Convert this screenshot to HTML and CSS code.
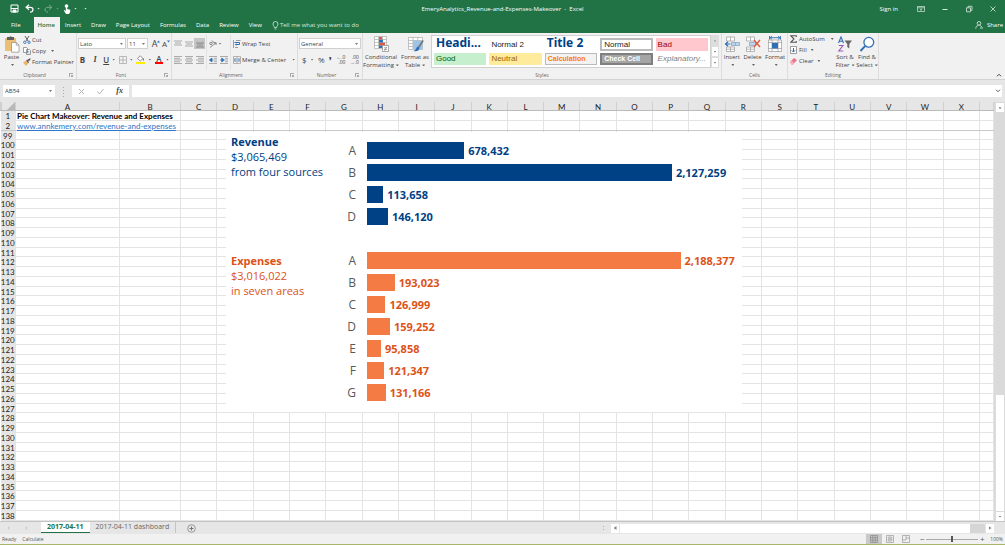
FILE: index.html
```
<!DOCTYPE html>
<html lang="en">
<head>
    <meta charset="UTF-8">
    <meta name="viewport" content="width=device-width, initial-scale=1.0">
    <title>EmeryAnalytics_Revenue-and-Expenses-Makeover - Excel</title>
    <link rel="stylesheet" href="styles.css">
</head>
<body>
    <!-- Title bar -->
    <header class="titlebar">
        <div class="quick">
            <button aria-label="Save"><svg width="9" height="9" viewBox="0 0 9 9"><path d="M1 1h7v7H1z" fill="none" stroke="#fff"/><path d="M1 4.5h7M3 6h3v2H3z" stroke="#fff" fill="#fff"/></svg></button>
            <button class="undo" aria-label="Undo"><svg width="9" height="9" viewBox="0 0 9 9"><path d="M4 .8 1.2 3.3 4 5.8M1.5 3.3h3.7c4 0 3.4 4.9-.2 4.9" fill="none" stroke="#fff" stroke-width="1.3"/></svg><i class="caret"></i></button>
            <button class="redo" aria-label="Redo"><svg width="9" height="9" viewBox="0 0 9 9"><path d="m5 .8 2.8 2.5L5 5.8M7.5 3.3H3.8c-4 0-3.4 4.9.2 4.9" fill="none" stroke="#fff"/></svg><i class="caret"></i></button>
            <button aria-label="Touch mode"><svg width="8" height="10" viewBox="0 0 8 10"><circle cx="3.5" cy="2" r="1.8" fill="#fff"/><path d="M2.8 2h1.4v3l3 .7V8L6 10H3L.8 6.5l.6-.6 1.4 1z" fill="#fff"/></svg><i class="caret"></i></button>
            <button aria-label="Customize toolbar"><i class="caret"></i></button>
        </div>
        <span>EmeryAnalytics_Revenue-and-Expenses-Makeover &nbsp;-&nbsp; Excel</span>
        <div class="window">
            <a href="#">Sign in</a>
            <button aria-label="Ribbon display options"><svg width="8" height="8" viewBox="0 0 8 8"><path d="M.5 1.5h7v5h-7zM.5 2.8h7M4 6V3.8M3 4.8l1-1 1 1" fill="none" stroke="#d7e8dd" stroke-width=".7"/></svg></button>
            <button aria-label="Minimize"><svg width="8" height="8" viewBox="0 0 8 8"><path d="M1.5 4.5h5" stroke="#d7e8dd"/></svg></button>
            <button aria-label="Restore"><svg width="8" height="8" viewBox="0 0 8 8"><path d="M1.5 2.8h4v4h-4zM3 2.8V1.3h4v4H5.5" fill="none" stroke="#d7e8dd" stroke-width=".8"/></svg></button>
            <button aria-label="Close"><svg width="8" height="8" viewBox="0 0 8 8"><path d="m1.5 1.5 5 5m0-5-5 5" stroke="#d7e8dd" stroke-width=".8"/></svg></button>
        </div>
    </header>

    <!-- Ribbon tabs -->
    <nav class="tabs">
        <a class="file" href="#">File</a>
        <a class="active" href="#">Home</a>
        <a href="#">Insert</a>
        <a href="#">Draw</a>
        <a href="#">Page Layout</a>
        <a href="#">Formulas</a>
        <a href="#">Data</a>
        <a href="#">Review</a>
        <a href="#">View</a>
        <a class="tell" href="#"><svg width="7" height="9" viewBox="0 0 7 9"><path d="M2.3 6.5C2.3 5 1 4.8 1 3a2.5 2.5 0 0 1 5 0c0 1.8-1.3 2-1.3 3.5zM2.5 8h2" fill="none" stroke="#d7e8dd" stroke-width=".8"/></svg>Tell me what you want to do</a>
        <a class="share" href="#"><svg width="8" height="8" viewBox="0 0 8 8"><circle cx="4" cy="2.3" r="1.8" fill="none" stroke="#fff" stroke-width=".7"/><path d="M.8 7.5C.8 5.5 2 4.6 3.5 4.4M4.5 4.4c1.4.2 2 1 2.2 1.8M5 7h3" fill="none" stroke="#fff" stroke-width=".7"/></svg>Share</a>
    </nav>

    <!-- Ribbon -->
    <section class="ribbon">
        <div class="group clipboard">
            <div class="tools">
                <button class="big"><svg width="16" height="17" viewBox="0 0 16 17"><path d="M1 2h11v13H1z" fill="#eac077"/><path d="M3 1h2.5a1.2 1.2 0 0 1 2.2 0H10v3H3z" fill="#5e5e5e"/><path d="M7.5 6.5h4.8l2.7 2.7v7H7.5z" fill="#fff" stroke="#8a8a8a" stroke-width=".7"/><path d="M12.3 6.5v2.7H15" fill="none" stroke="#8a8a8a" stroke-width=".7"/></svg>Paste<i class="caret"></i></button>
                <div class="stack">
                    <button><svg width="8" height="8" viewBox="0 0 8 8"><path d="M2 0l3 5M6 0 3 5" stroke="#666"/><circle cx="1.8" cy="6.3" r="1.2" fill="none" stroke="#2f6fb5" stroke-width=".9"/><circle cx="6" cy="6.3" r="1.2" fill="none" stroke="#2f6fb5" stroke-width=".9"/></svg>Cut</button>
                    <button><svg width="8" height="8" viewBox="0 0 8 8"><path d="M.5.5h3l1 1v4h-4zM3.5 2.5h3l1 1v4h-4z" fill="#fff" stroke="#777" stroke-width=".7"/><path d="M4.3 4.5h2.2M4.3 6h2.2" stroke="#2f6fb5" stroke-width=".5"/></svg>Copy <i class="caret"></i></button>
                    <button><svg width="8" height="8" viewBox="0 0 8 8"><path d="M0 4.5 3.5 2.3 5.5 5 3 8z" fill="#eab765"/><path d="m3.2 2.3 1.3-.9L6 3.3 7.8 1 7 .2 5 1.5l.8 3.2-.6.6z" fill="#555"/></svg>Format Painter</button>
                </div>
            </div>
            <h2>Clipboard<i class="launch"></i></h2>
        </div>

        <div class="group font">
            <div class="tools rows">
                <div class="row">
                    <span class="drop name"><select aria-label="Font"><option>Lato</option></select></span>
                    <span class="drop size"><select aria-label="Font size"><option>11</option></select></span>
                    <button class="grow" aria-label="Increase font size">A<svg width="3" height="3" viewBox="0 0 3 3"><path d="M0 2.5 1.5.5 3 2.5z" fill="#2f6fb5"/></svg></button>
                    <button class="grow small" aria-label="Decrease font size">A<svg width="3" height="3" viewBox="0 0 3 3"><path d="M0 .5h3L1.5 2.5z" fill="#2f6fb5"/></svg></button>
                </div>
                <div class="row spread">
                    <button class="glyph letter bold">B</button>
                    <button class="glyph letter italic">I</button>
                    <button class="glyph under"><u>U</u><i class="caret"></i></button>
                    <button aria-label="Borders"><svg width="8" height="8" viewBox="0 0 8 8"><path d="M.5.5h7v7h-7zM4 .5v7M.5 4h7" fill="none" stroke="#999" stroke-width=".6"/></svg><i class="caret"></i></button>
                    <button aria-label="Fill color"><svg width="9" height="9" viewBox="0 0 9 9"><path d="m1.5 3.5 2.8-2.7L7 3.5 4.3 6z" fill="#fff" stroke="#666" stroke-width=".7"/><path d="M7 3c1 1 1.3 2 .7 2.5-.6.3-1-.7-.7-2.5" fill="#2f6fb5"/><path d="M0 7h9v2H0z" fill="#ffee00"/></svg><i class="caret"></i></button>
                    <button class="color" aria-label="Font color"><span>A</span><i class="caret"></i></button>
                </div>
            </div>
            <h2>Font<i class="launch"></i></h2>
        </div>

        <div class="group align">
            <div class="tools">
                <div class="rows side">
                    <div class="row">
                        <button aria-label="Top align"><svg width="8" height="8" viewBox="0 0 8 8"><path d="M0 1h8M1 3h6M0 5h8" stroke="#999" stroke-width=".8"/></svg></button>
                        <button aria-label="Middle align"><svg width="8" height="8" viewBox="0 0 8 8"><path d="M0 2h8M1 4h6M0 6h8" stroke="#999" stroke-width=".8"/></svg></button>
                        <button class="on" aria-label="Bottom align"><svg width="8" height="8" viewBox="0 0 8 8"><path d="M0 3h8M1 5h6M0 7h8" stroke="#777" stroke-width=".8"/></svg></button>
                    </div>
                    <div class="row">
                        <button aria-label="Align left"><svg width="8" height="8" viewBox="0 0 8 8"><path d="M0 .5h8M0 2.3h6M0 4h8M0 5.8h6M0 7.5h8" stroke="#999" stroke-width=".8"/></svg></button>
                        <button aria-label="Center"><svg width="8" height="8" viewBox="0 0 8 8"><path d="M0 .5h8M1 2.3h6M0 4h8M1 5.8h6M0 7.5h8" stroke="#999" stroke-width=".8"/></svg></button>
                        <button aria-label="Align right"><svg width="8" height="8" viewBox="0 0 8 8"><path d="M0 .5h8M2 2.3h6M0 4h8M2 5.8h6M0 7.5h8" stroke="#999" stroke-width=".8"/></svg></button>
                    </div>
                </div>
                <div class="rows side">
                    <div class="row">
                        <button aria-label="Orientation"><svg width="8" height="8" viewBox="0 0 8 8"><path d="M1 7.5 7 3M5 2.5l2.3.3L7 5" fill="none" stroke="#777" stroke-width=".8"/><circle cx="2" cy="3.5" r="1.2" fill="none" stroke="#666" stroke-width=".8"/><path d="m3 .5 2.5 3" stroke="#666" stroke-width=".8"/></svg><i class="caret"></i></button>
                    </div>
                    <div class="row">
                        <button aria-label="Decrease indent"><svg width="8" height="8" viewBox="0 0 8 8"><path d="M0 .5h8M5 2.3h3M5 4h3M5 5.8h3M0 7.5h8" stroke="#999" stroke-width=".8"/><path d="M3 2v4L.3 4zM3 4h1.5" fill="#2f6fb5" stroke="#2f6fb5" stroke-width=".7"/></svg></button>
                        <button aria-label="Increase indent"><svg width="8" height="8" viewBox="0 0 8 8"><path d="M0 .5h8M5 2.3h3M5 4h3M5 5.8h3M0 7.5h8" stroke="#999" stroke-width=".8"/><path d="M1.7 2v4l2.7-2zM0 4h2" fill="#2f6fb5" stroke="#2f6fb5" stroke-width=".7"/></svg></button>
                    </div>
                </div>
                <div class="rows wrap">
                    <div class="row">
                        <button><svg width="8" height="8" viewBox="0 0 8 8"><path d="M.5 0v8M3 .5h4.5M2 7.5h3" stroke="#777" stroke-width=".7"/><path d="M1.5 2.5h5v2H3" fill="none" stroke="#2f6fb5"/><path d="M3.5 3.3v2.5L1.8 4.5z" fill="#2f6fb5"/></svg>Wrap Text</button>
                    </div>
                    <div class="row">
                        <button><svg width="8" height="8" viewBox="0 0 8 8"><path d="M.5.5h7v7h-7zM.5 2.3h7M.5 5.7h7M4 .5v1.8M4 5.7v1.8" fill="#fff" stroke="#888" stroke-width=".6"/><path d="M1.5 4h5M2.5 3 1.3 4l1.2 1M5.5 3l1.2 1-1.2 1" fill="none" stroke="#2f6fb5" stroke-width=".8"/></svg>Merge &amp; Center <i class="caret far"></i></button>
                    </div>
                </div>
            </div>
            <h2>Alignment<i class="launch"></i></h2>
        </div>

        <div class="group number">
            <div class="tools rows">
                <div class="row"><span class="drop format"><select aria-label="Number format"><option>General</option></select></span></div>
                <div class="row spread">
                    <button class="glyph">$<i class="caret"></i></button>
                    <button class="glyph">%</button>
                    <button class="glyph bold" aria-label="Comma style">❜</button>
                    <button class="zeros" aria-label="Increase decimal"><span><b>←</b>.0</span><span>.00</span></button>
                    <button class="zeros" aria-label="Decrease decimal"><span>.00</span><span><b>→</b>.0</span></button>
                </div>
            </div>
            <h2>Number<i class="launch"></i></h2>
        </div>

        <div class="group styles">
            <div class="tools">
                <button class="big wide"><svg width="16" height="17" viewBox="0 0 16 17"><path d="M1.5.5h12v12h-12zM1.5 3.5h12M1.5 6.5h12M1.5 9.5h12M5.5.5v12M9.5.5v12" fill="#fff" stroke="#aaa" stroke-width=".7"/><path d="M6 1h3v2.5H6zM6 6.7h6v2.5H6z" fill="#dc5b41"/><path d="M6 3.7h4v2.7H6zM6 9.5h3V12H6z" fill="#2f6fb5"/><path d="M9.5 9.5h6v6h-6z" fill="#fff" stroke="#888" stroke-width=".7"/><path d="M11 13.5h3M11 11.8h3M13.5 10.8l-2 4" stroke="#666" stroke-width=".5"/></svg><span>Conditional<br>Formatting<i class="caret"></i></span></button>
                <button class="big"><svg width="17" height="17" viewBox="0 0 17 17"><path d="M1.5 1.5h14v12h-14zM1.5 4.5h14M1.5 7.5h14M1.5 10.5h14M6 1.5v12M10.8 1.5v12" fill="#fff" stroke="#aaa" stroke-width=".7"/><path d="M6 4.7h9.5v8.5H6z" fill="#9dc3e6"/><path d="M15.5 4 11 10.5l1.5 1.2L16.8 5z" fill="#777"/><path d="M11 10.5c-2 .3-1.5 3.5-4.5 4.5 3 1 6-.5 6-3.3z" fill="#2f6fb5"/></svg><span>Format as<br>Table<i class="caret"></i></span></button>
                <div class="gallery">
                    <button class="heading">Headi...</button>
                    <button>Normal 2</button>
                    <button class="heading">Title 2</button>
                    <button class="normal">Normal</button>
                    <button class="bad">Bad</button>
                    <button class="good">Good</button>
                    <button class="neutral">Neutral</button>
                    <button class="calc">Calculation</button>
                    <button class="check">Check Cell</button>
                    <button class="explain">Explanatory...</button>
                </div>
                <div class="spin">
                    <button aria-label="Previous styles"><i class="caret up"></i></button>
                    <button aria-label="Next styles"><i class="caret"></i></button>
                    <button aria-label="More styles"><i class="caret"></i></button>
                </div>
            </div>
            <h2>Styles</h2>
        </div>

        <div class="group cells">
            <div class="tools">
                <button class="big"><svg width="16" height="17" viewBox="0 0 16 17"><path d="M2.5 1h8v4h-8zM6.5 1v4M2.5 11h8v4.5h-8zM6.5 11v4.5M2.5 13.2h8" fill="#fff" stroke="#999" stroke-width=".7"/><path d="M7.5 6.5h8v3h-8zM11.5 6.5v3" fill="#bdd7ee" stroke="#7f9db9" stroke-width=".7"/><path d="M1.5 8h5M4 5.8 1.5 8 4 10.2" fill="none" stroke="#2f6fb5" stroke-width="1.2"/></svg>Insert<i class="caret"></i></button>
                <button class="big"><svg width="16" height="17" viewBox="0 0 16 17"><path d="M1.5 1h8v4h-8zM5.5 1v4M1.5 11h8v4.5h-8zM5.5 11v4.5M1.5 13.2h8" fill="#fff" stroke="#999" stroke-width=".7"/><path d="M4.5 6.5h6v3h-6z" fill="#bdd7ee" stroke="#7f9db9" stroke-width=".7"/><path d="m9 4 6 7m0-7-6 7" stroke="#dc5b41" stroke-width="1.4"/></svg>Delete<i class="caret"></i></button>
                <button class="big"><svg width="16" height="17" viewBox="0 0 16 17"><path d="M1.5 4h13v11.5h-13zM1.5 6.5h13M1.5 12.5h13M5 4v11.5M11 4v11.5" fill="#fff" stroke="#999" stroke-width=".7"/><path d="M5 7h6v5.5H5z" fill="#2f6fb5"/><path d="M2.5 0v3.5M13.5 0v3.5M3 1.7h10M5 .3 3 1.7l2 1.5M11 .3l2 1.4-2 1.5" fill="none" stroke="#2f6fb5" stroke-width=".9"/></svg>Format<i class="caret"></i></button>
            </div>
            <h2>Cells</h2>
        </div>

        <div class="group editing">
            <div class="tools">
                <div class="stack">
                    <button><svg width="7" height="8" viewBox="0 0 7 8"><path d="M6.3 2V.7H.8L4 4 .8 7.3h5.5V6" fill="none" stroke="#555" stroke-width="1.1"/></svg>AutoSum <i class="caret"></i></button>
                    <button><svg width="7" height="8" viewBox="0 0 7 8"><path d="M.5.5h6v7h-6z" fill="#fff" stroke="#777" stroke-width=".7"/><path d="M3.5 2v4M1.8 4.3 3.5 6l1.7-1.7" fill="none" stroke="#2f6fb5"/></svg>Fill<i class="caret near"></i></button>
                    <button><svg width="7" height="8" viewBox="0 0 7 8"><path d="m0 5 4-4 3 2-4 4.5H1.5z" fill="#e8748a"/><path d="m0 5 1.5-1.5L4.3 6 3 7.5H1.5z" fill="#f4b1bd"/></svg>Clear<i class="caret near"></i></button>
                </div>
                <button class="big"><svg width="16" height="17" viewBox="0 0 16 17"><path d="M1.5 7 4 1l2.5 6M2.5 5.2h3" fill="none" stroke="#2f6fb5" stroke-width="1.1"/><path d="M1.8 9.5H6L1.8 15H6.3" fill="none" stroke="#9b59b6" stroke-width="1.1"/><path d="M7.5 4.5H15L12.3 8v4.5l-2-1.5V8z" fill="#666"/></svg><span>Sort &amp;<br>Filter<i class="caret"></i></span></button>
                <button class="big"><svg width="16" height="17" viewBox="0 0 16 17"><circle cx="9.8" cy="6.3" r="4.9" fill="#fff" stroke="#2f6fb5" stroke-width="1.3"/><path d="M6.3 9.8 1.5 15" stroke="#2f6fb5" stroke-width="1.9"/></svg><span>Find &amp;<br>Select<i class="caret"></i></span></button>
            </div>
            <h2>Editing</h2>
        </div>
        <button class="collapse" aria-label="Collapse ribbon"><svg width="6" height="4" viewBox="0 0 6 4"><path d="m.8 3.3 2.2-2 2.2 2" fill="none" stroke="#555"/></svg></button>
    </section>

    <!-- Formula bar -->
    <section class="formula">
        <span class="drop cell"><input aria-label="Name box" value="AB54"></span>
        <span class="dots"></span>
        <div class="entry">
            <button aria-label="Cancel"><svg width="7" height="7" viewBox="0 0 7 7"><path d="m1 1 5 5m0-5L1 6" stroke="#b5b5b5"/></svg></button>
            <button aria-label="Enter"><svg width="7" height="7" viewBox="0 0 7 7"><path d="m.5 3.5 2 2.5 4-5" fill="none" stroke="#b5b5b5"/></svg></button>
            <button class="fx">fx</button>
        </div>
        <span class="text"><input aria-label="Formula"><svg width="6" height="4" viewBox="0 0 6 4"><path d="m1 .7 2 2 2-2" fill="none" stroke="#555"/></svg></span>
    </section>

    <!-- Sheet -->
    <main class="sheet">
        <div class="grid">
            <table>
                <colgroup id="cols"><col class="col-num"><col class="col-a"><col class="col-b"></colgroup>
                <thead><tr id="letters"><th class="corner"></th></tr></thead>
                <tbody id="rows"></tbody>
            </table>

            <div class="chart">
                <section class="revenue">
                    <div class="note">
                        <h3>Revenue</h3>
                        <p>$3,065,469</p>
                        <p>from four sources</p>
                    </div>
                    <div class="bars">
                        <div class="bar"><span>A</span><div><i style="width: 25.9%"></i><b>678,432</b></div></div>
                        <div class="bar"><span>B</span><div><i style="width: 81.3%"></i><b>2,127,259</b></div></div>
                        <div class="bar"><span>C</span><div><i style="width: 4.3%"></i><b>113,658</b></div></div>
                        <div class="bar"><span>D</span><div><i style="width: 5.6%"></i><b>146,120</b></div></div>
                    </div>
                </section>
                <section class="expenses">
                    <div class="note">
                        <h3>Expenses</h3>
                        <p>$3,016,022</p>
                        <p>in seven areas</p>
                    </div>
                    <div class="bars">
                        <div class="bar"><span>A</span><div><i style="width: 83.6%"></i><b>2,188,377</b></div></div>
                        <div class="bar"><span>B</span><div><i style="width: 7.4%"></i><b>193,023</b></div></div>
                        <div class="bar"><span>C</span><div><i style="width: 4.9%"></i><b>126,999</b></div></div>
                        <div class="bar"><span>D</span><div><i style="width: 6.1%"></i><b>159,252</b></div></div>
                        <div class="bar"><span>E</span><div><i style="width: 3.7%"></i><b>95,858</b></div></div>
                        <div class="bar"><span>F</span><div><i style="width: 4.6%"></i><b>121,347</b></div></div>
                        <div class="bar"><span>G</span><div><i style="width: 5%"></i><b>131,166</b></div></div>
                    </div>
                </section>
            </div>
        </div>
        <div class="vscroll">
            <button aria-label="Scroll up"><i class="caret up"></i></button>
            <span class="track"><span class="thumb"></span></span>
            <button aria-label="Scroll down"><i class="caret"></i></button>
        </div>
    </main>

    <!-- Sheet tabs -->
    <nav class="sheets">
        <span class="arrows"><button aria-label="Previous sheet">‹</button><button aria-label="Next sheet">›</button></span>
        <a class="active" href="#">2017-04-11</a>
        <a class="last" href="#">2017-04-11 dashboard</a>
        <button class="add" aria-label="New sheet"><svg width="9" height="9" viewBox="0 0 9 9"><circle cx="4.5" cy="4.5" r="3.8" fill="none" stroke="#888" stroke-width=".8"/><path d="M4.5 2.5v4M2.5 4.5h4" stroke="#777"/></svg></button>
        <div class="hscroll">
            <span class="dots"></span>
            <button aria-label="Scroll left"><i class="caret left"></i></button>
            <span class="track"><span class="thumb"></span></span>
            <button aria-label="Scroll right"><i class="caret right"></i></button>
        </div>
    </nav>

    <!-- Status bar -->
    <footer class="status">
        <span>Ready</span>
        <span>Calculate</span>
        <div class="views">
            <button class="on" aria-label="Normal view"><svg width="8" height="8" viewBox="0 0 8 8"><path d="M.5.5h7v7h-7zM.5 2.8h7M.5 5.2h7M2.8.5v7M5.2.5v7" fill="none" stroke="#888" stroke-width=".7"/></svg></button>
            <button aria-label="Page layout view"><svg width="8" height="8" viewBox="0 0 8 8"><path d="M.5.5h7v7h-7zM2.3 2h3.4v4H2.3zM3 3.3h2M3 4.6h2" fill="none" stroke="#999" stroke-width=".7"/></svg></button>
            <button aria-label="Page break view"><svg width="8" height="8" viewBox="0 0 8 8"><path d="M.5.5h7v7h-7zM.5 5H4V.5M4 3h3.5" fill="none" stroke="#999" stroke-width=".7"/></svg></button>
        </div>
        <button class="step" aria-label="Zoom out">−</button>
        <input type="range" aria-label="Zoom" min="0" max="100" value="50">
        <button class="step" aria-label="Zoom in">+</button>
        <span class="zoom">100%</span>
    </footer>

    <script>
        const letters = "ABCDEFGHIJKLMNOPQRSTUVWX".split("");
        const cols = document.getElementById("cols");
        const head = document.getElementById("letters");
        const body = document.getElementById("rows");

        letters.forEach((letter, i) => {
            if (i > 1) cols.appendChild(document.createElement("col"));
            const th = document.createElement("th");
            th.textContent = letter;
            head.appendChild(th);
        });
        cols.insertAdjacentHTML("beforeend", '<col class="col-last">');
        head.insertAdjacentHTML("beforeend", "<th></th>");

        // The two frozen rows carry the text, the rest are empty
        const frozen = {
            1: "Pie Chart Makeover: Revenue and Expenses",
            2: '<a href="#">www.annkemery.com/revenue-and-expenses</a>'
        };

        function addRow(n) {
            const text = frozen[n];
            const first = text ? `<td class="text" colspan="2">${text}</td>` : "<td></td><td></td>";
            const cls = text ? `frozen-${n}` : "";
            body.insertAdjacentHTML("beforeend", `<tr class="${cls}"><th>${n}</th>${first}${"<td></td>".repeat(23)}</tr>`);
        }

        addRow(1);
        addRow(2);
        for (let n = 99; n <= 138; n++) addRow(n);
    </script>
</body>
</html>
```
FILE: styles.css
```
* {
    box-sizing: border-box;
}
body {
    margin: 0;
    height: 100vh;
    display: flex;
    flex-direction: column;
    overflow: hidden;
    font-family: "Open Sans", "Noto Sans", sans-serif;
    font-size: 6px;
    line-height: 8px;
    color: #444;
    background: #e6e6e6;
    border-bottom: 1px solid #a9b56b;
}
button {
    display: inline-flex;
    align-items: center;
    justify-content: center;
    margin: 0;
    padding: 0;
    border: 0;
    background: none;
    color: inherit;
    font: inherit;
    white-space: nowrap;
}
a {
    color: inherit;
    text-decoration: none;
}
input, select {
    appearance: none;
    margin: 0;
    padding: 0;
    border: 0;
    width: 100%;
    min-width: 0;
    background: none;
    color: inherit;
    font: inherit;
}
svg {
    display: block;
    flex: none;
}
.caret {
    flex: none;
    display: inline-block;
    width: 3px;
    height: 2px;
    margin-left: 4px;
    vertical-align: middle;
    background: currentColor;
    opacity: 0.8;
    clip-path: polygon(0 0, 100% 0, 50% 100%);
}
.caret.up {
    clip-path: polygon(0 100%, 100% 100%, 50% 0);
}
.caret.left {
    height: 4px;
    clip-path: polygon(100% 0, 100% 100%, 0 50%);
}
.caret.right {
    height: 4px;
    clip-path: polygon(0 0, 0 100%, 100% 50%);
}
.caret.far {
    margin-left: 5px;
}
.caret.near {
    margin-left: 2px;
}

/* Title bar */
.titlebar {
    display: grid;
    grid-template-columns: 1fr auto 1fr;
    align-items: center;
    height: 17px;
    background: #217346;
    color: #fff;
}
.quick {
    display: flex;
    gap: 4px;
    padding-left: 10px;
}
.quick .undo {
    margin-left: 2px;
}
.quick .caret {
    margin-left: 3px;
}
.redo {
    opacity: 0.4;
}
.window {
    display: flex;
    align-items: center;
    justify-content: flex-end;
    gap: 16px;
    padding-right: 8px;
}
.window a {
    margin-right: 3px;
}

/* Ribbon tabs */
.tabs {
    display: flex;
    align-items: stretch;
    height: 16px;
    background: #217346;
    color: #fff;
}
.tabs a {
    display: flex;
    align-items: center;
    padding: 0 5px;
}
.tabs .file {
    padding: 0 13px 0 11px;
}
.tabs .active {
    padding: 0 5px 0 4px;
    background: #f1f1f1;
    color: #217346;
    font-weight: 600;
}
.tabs .tell {
    gap: 1px;
    color: #d7e8dd;
}
.tabs .share {
    margin-left: auto;
    gap: 4px;
    padding-right: 2px;
}

/* Ribbon */
.ribbon {
    display: flex;
    height: 47px;
    background: #f1f1f1;
    border-bottom: 1px solid #d2d2d2;
}
.group {
    display: flex;
    flex-direction: column;
    border-right: 1px solid #dcdcdc;
}
.group h2 {
    display: flex;
    align-items: center;
    justify-content: center;
    margin: 0;
    height: 9px;
    font-size: 5px;
    font-weight: 400;
    color: #666;
}
.launch {
    width: 4px;
    height: 4px;
    margin: 0 3px 0 auto;
    border: solid #aaa;
    border-width: 1px 0 0 1px;
    background: linear-gradient(#aaa, #aaa) 100% 100% / 2px 2px no-repeat;
}
.group h2:has(.launch)::before {
    content: "";
    margin-left: auto;
}
.tools {
    flex: 1;
    display: flex;
    padding-top: 2px;
}
.rows {
    display: flex;
    flex-direction: column;
}
.row {
    display: flex;
    align-items: center;
    height: 15px;
    margin-top: 1px;
}
.spread {
    justify-content: space-between;
}
.big {
    flex-direction: column;
    justify-content: flex-start;
    padding-top: 1px;
}
.big > .caret {
    margin: 3px 0 0;
}
.stack {
    display: flex;
    flex-direction: column;
    align-items: flex-start;
    gap: 3px;
    padding-top: 1px;
}
.stack button {
    gap: 1px;
}
.drop {
    position: relative;
    display: flex;
    background: #fff;
    border: 1px solid #d0d0d0;
    height: 11px;
    padding-left: 1px;
}
.drop::after {
    content: "";
    position: absolute;
    top: 4px;
    right: 2px;
    width: 3px;
    height: 2px;
    background: #777;
    clip-path: polygon(0 0, 100% 0, 50% 100%);
}
.clipboard {
    width: 77px;
}
.clipboard .big {
    width: 23px;
}
.font {
    width: 95px;
    padding-left: 1px;
}
.name {
    width: 48px;
}
.size {
    width: 21px;
    margin: 0 3px 0 1px;
}
.grow {
    align-items: flex-start;
    width: 10px;
    font-size: 9px;
}
.grow.small {
    font-size: 8px;
}
.font .spread {
    padding: 0 2px 0 0;
}
.glyph {
    font-size: 8px;
}
.letter {
    width: 9px;
}
.bold {
    font-weight: 700;
}
.italic {
    font-style: italic;
    font-family: "Liberation Serif", serif;
    font-weight: 700;
}
.glyph u {
    font-weight: 600;
}
.font .spread .caret {
    margin-left: 3px;
}
.color span {
    width: 8px;
    border-bottom: 2px solid #f00;
    font-size: 8px;
    font-weight: 600;
    line-height: 7px;
}
.align {
    width: 126px;
}
.side {
    padding: 0 1px 0 0;
}
.side .row button {
    width: 11px;
    height: 11px;
}
.side + .side {
    border-left: 1px solid #e2e2e2;
    border-right: 1px solid #e2e2e2;
}
.side .caret {
    margin-left: 2px;
    margin-right: -5px;
}
.side .on {
    background: #c5c5c5;
}
.wrap {
    padding-left: 2px;
}
.wrap button {
    gap: 1px;
}
.number {
    width: 65px;
}
.number .row {
    padding: 0 1px;
}
.number .spread {
    padding: 0 3px 0 4px;
}
.format {
    flex: 1;
}
.zeros {
    flex-direction: column;
    align-items: flex-end;
    font-size: 5px;
    line-height: 5px;
}
.zeros b {
    color: #2f6fb5;
}
.styles {
    flex: 0 0 359px;
}
.styles .big {
    width: 32px;
    line-height: 8px;
}
.styles .wide {
    width: 36px;
}
.big .caret {
    margin-left: 2px;
}
.gallery {
    flex: 1;
    display: grid;
    grid-template-columns: repeat(5, 1fr);
    grid-template-rows: 13px 12px;
    gap: 2px 3px;
    padding: 2px;
    height: 33px;
    background: #fff;
    border: 1px solid #d0d0d0;
    font-family: "Liberation Sans", sans-serif;
    font-size: 8px;
    color: #222;
}
.gallery button {
    justify-content: flex-start;
    padding: 0 2px;
}
.gallery .heading {
    align-items: flex-start;
    font-family: "Noto Sans", sans-serif;
    font-size: 12px;
    font-weight: 700;
    line-height: 10px;
    color: #004185;
}
.gallery .normal {
    border: 2px solid #bbb;
}
.gallery .bad {
    background: #ffc7ce;
    color: #9c0006;
}
.gallery .good {
    background: #c6efce;
    color: #006100;
}
.gallery .neutral {
    background: #ffeb9c;
    color: #9c6500;
}
.gallery .calc {
    background: #f2f2f2;
    border: 1px solid #bbb;
    color: #fa7d00;
    font-size: 7px;
    font-weight: 700;
}
.gallery .check {
    background: #a5a5a5;
    border: 2px double #7f7f7f;
    color: #fff;
    font-size: 7px;
    font-weight: 700;
}
.gallery .explain {
    color: #7f7f7f;
    font-style: italic;
}
.spin {
    display: flex;
    flex-direction: column;
    width: 8px;
    height: 33px;
    margin-right: 2px;
}
.spin button {
    flex: 1;
    border: 1px solid #ddd;
    background: #fff;
}
.spin button:first-child {
    background: #ddd;
    color: #999;
}
.spin .caret, .vscroll .caret, .hscroll .caret {
    margin: 0;
}
.cells {
    width: 66px;
}
.cells .tools {
    justify-content: space-around;
}
.editing {
    width: 91px;
}
.editing .tools {
    padding-left: 2px;
}
.editing .stack {
    width: 44px;
    gap: 3px;
    padding-top: 0;
}
.editing .stack button {
    gap: 2px;
}
.editing .big {
    width: 22px;
}
.collapse {
    align-self: flex-end;
    margin: 0 3px 2px auto;
}

/* Formula bar */
.formula {
    display: flex;
    align-items: center;
    height: 22px;
    padding: 0 3px;
}
.formula > * {
    height: 12px;
}
.cell {
    width: 52px;
    border-color: #fff;
}
.dots {
    width: 1px;
    margin: 0 8px;
    background: repeating-linear-gradient(transparent 0 2px, #aaa 2px 3px);
}
.entry {
    display: flex;
    justify-content: space-around;
    width: 57px;
    background: #fff;
}
.fx {
    font: italic 700 8px/10px "Liberation Serif", serif;
}
.formula .text {
    flex: 1;
    display: flex;
    align-items: center;
    margin-left: 3px;
    padding-right: 1px;
    background: #fff;
}

/* Sheet */
.sheet {
    flex: 1;
    min-height: 0;
    display: flex;
}
.grid {
    flex: 1;
    position: relative;
}
.grid table {
    width: 100%;
    height: 100%;
    table-layout: fixed;
    border-collapse: collapse;
    background: #fff;
    font-family: Lato, sans-serif;
    font-size: 8px;
    line-height: 5px;
}
.col-num {
    width: 15px;
}
.col-a {
    width: 104px;
}
.col-b {
    width: 61px;
}
.col-last {
    width: 14px;
}
.grid td, .grid th {
    padding: 3px 0 0;
    border: 1px solid #e4e4e4;
    vertical-align: top;
    white-space: nowrap;
}
.grid th {
    background: #e6e6e6;
    font-weight: 400;
    color: #222;
}
.grid thead th {
    border-color: #d0d0d0;
    border-top: 0;
    border-bottom-color: #bbb;
}
.grid tbody th {
    border-left: 0;
    text-align: center;
}
.grid .corner {
    background: #e6e6e6 linear-gradient(135deg, transparent 62%, #b8b8b8 62%);
}
.grid .text {
    padding-left: 1px;
}
.frozen-1 td {
    color: #000;
    font-weight: 700;
}
.frozen-2 td {
    color: #2e75c8;
}
.grid .frozen-2 td, .grid .frozen-2 th {
    border-bottom-color: #c8c8c8;
}
.frozen-2 a {
    text-decoration: underline;
}

/* Chart floats above the cells */
.chart {
    position: absolute;
    top: 30px;
    left: 226px;
    width: 516px;
    height: 280px;
    padding: 7px 0 0 5px;
    background: #fff;
    font-size: 11px;
    line-height: 15px;
}
.chart section {
    display: grid;
    grid-template-columns: 110px 1fr;
}
.chart h3, .chart p {
    margin: 0;
    font-size: 11px;
}
.note {
    margin-top: -5px;
}
.revenue {
    margin-bottom: 22px;
    color: #004185;
}
.expenses {
    color: #dc5318;
}
.expenses .note {
    margin-top: 4px;
}
.bar {
    display: grid;
    grid-template-columns: 15px 1fr;
    column-gap: 11px;
    align-items: center;
    height: 22px;
}
.bar span {
    font-size: 12px;
    text-align: right;
    color: #595959;
}
.bar div {
    display: flex;
    align-items: center;
    gap: 4px;
}
.bar i {
    flex: none;
    height: 17px;
    background: #004185;
}
.expenses .bar i {
    background: #f47b43;
}

/* Scroll bars */
.vscroll {
    display: flex;
    flex-direction: column;
    width: 11px;
    padding: 1px 1px 0 2px;
    background: #dadada;
}
.vscroll button {
    height: 9px;
    background: #fff;
    color: #555;
}
.vscroll .track {
    flex: 1;
    display: flex;
    flex-direction: column;
    justify-content: flex-end;
}
.vscroll .thumb {
    height: 29%;
    margin-bottom: 1px;
    background: #fff;
}
.hscroll {
    flex: 0 0 40%;
    display: flex;
    align-items: center;
    height: 9px;
    margin-left: auto;
    padding-right: 11px;
}
.hscroll .dots {
    height: 8px;
    margin: 0 7px 0 0;
}
.hscroll button {
    width: 8px;
    height: 9px;
    background: #fff;
}
.hscroll .track {
    flex: 1;
    height: 9px;
    margin: 0 1px;
    background: #d6d6d6;
}
.hscroll .thumb {
    display: block;
    width: 96%;
    height: 9px;
    background: #fff;
}

/* Sheet tabs */
.sheets {
    display: flex;
    align-items: center;
    height: 13px;
    border-top: 1px solid #c4c4c4;
    font-size: 7px;
    color: #666;
}
.arrows {
    display: flex;
    justify-content: space-around;
    width: 35px;
    margin-right: 6px;
    color: #aaa;
}
.sheets a {
    align-self: flex-start;
    height: 11px;
    padding: 0 6px;
    line-height: 10px;
}
.sheets .active {
    background: #fff;
    border-bottom: 1px solid #217346;
    color: #217346;
    font-weight: 700;
}
.sheets .last {
    border-right: 1px solid #c4c4c4;
}
.add {
    margin-left: 11px;
}

/* Status bar */
.status {
    display: flex;
    align-items: center;
    gap: 6px;
    height: 10px;
    padding: 0 2px;
    background: #f1f1f1;
    font-size: 5px;
    color: #555;
}
.views {
    display: flex;
    margin-left: auto;
}
.views button {
    width: 16px;
    height: 10px;
}
.views .on {
    background: #c9c9c9;
}
.step {
    width: 4px;
    font-size: 8px;
}
.status input {
    width: 52px;
    height: 8px;
    margin: 0 -4px;
    background: linear-gradient(#aaa, #aaa) center / 100% 1px no-repeat;
}
.status input::-webkit-slider-thumb {
    appearance: none;
    width: 2px;
    height: 6px;
    background: #555;
}
```
